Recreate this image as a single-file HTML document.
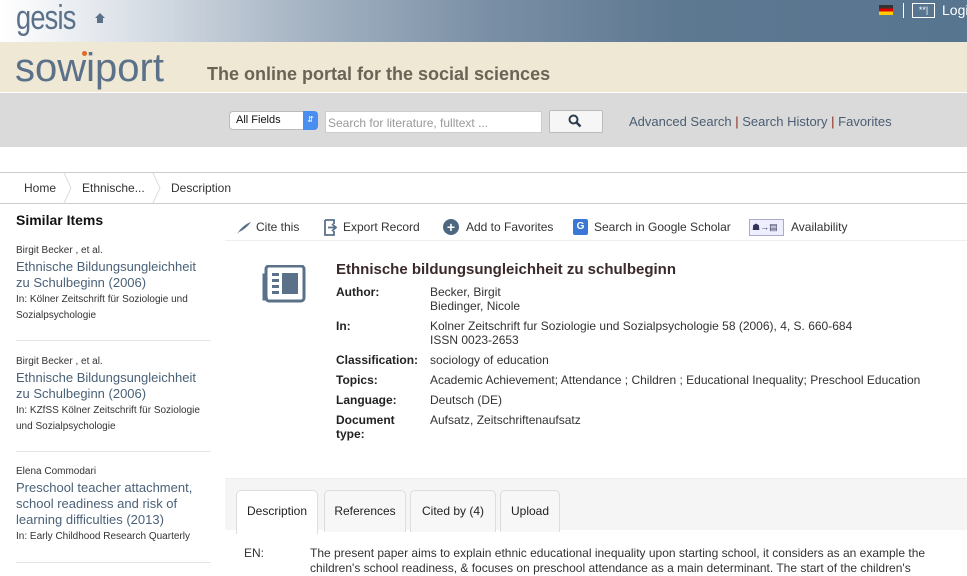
<!DOCTYPE html>
<html><head><meta charset="utf-8"><style>
*{margin:0;padding:0;box-sizing:border-box}
body{width:967px;height:576px;overflow:hidden;font-family:"Liberation Sans",Arial,sans-serif;background:#fff;color:#333;position:relative}
.a{position:absolute;white-space:nowrap}
#top{position:absolute;left:0;top:0;width:967px;height:42px;background:linear-gradient(90deg,#fff 0%,#dfe4ea 12%,#a9b7c6 30%,#7b90a6 50%,#5d7891 70%,#587590 100%)}
#beige{position:absolute;left:0;top:42px;width:967px;height:50px;background:#eee8d5}
#grey{position:absolute;left:0;top:93px;width:967px;height:54px;background:#dadada}
.lnk{color:#4a5d73}
.sep{color:#8a2a1a}
.sim{font-size:11px;color:#333}
.simt{font-size:13px;color:#4a6178;line-height:16px}
.lab{font-size:12px;font-weight:bold;color:#222}
.val{font-size:12px;color:#333}
.tab{position:absolute;top:490px;height:42px;border:1px solid #ddd;border-bottom:none;border-radius:5px 5px 0 0;background:#f7f7f7;font-size:12px;color:#222;text-align:center;padding-top:13px}
</style></head><body>
<div id="top"></div>
<div class="a" style="left:16px;top:-1px;font-size:34px;color:#5a7189;letter-spacing:-1px;transform:scaleX(.8);transform-origin:left">gesis</div>
<svg class="a" style="left:94px;top:12px" width="12" height="12"><path d="M6 1L1 6h2v5h6V6h2z" fill="#5a7189"/></svg>
<div class="a" style="left:879px;top:5px;width:14px;height:10px;background:linear-gradient(#333 33%,#d00 33% 66%,#fc0 66%)"></div>
<div class="a" style="left:903px;top:3px;width:1px;height:15px;background:#fff"></div>
<div class="a" style="left:912px;top:3px;width:23px;height:15px;border:1px solid #fff;color:#fff;font-size:9px;line-height:13px;text-align:center">**|</div>
<div class="a" style="left:942px;top:2px;font-size:14px;color:#fff">Login</div>
<div id="beige"></div>
<div class="a" style="left:15px;top:46px;font-size:40px;color:#5a7189;transform:scaleX(1.0);transform-origin:left;line-height:44px">sowiport</div>
<div class="a" style="left:82px;top:51px;width:5px;height:5px;border-radius:50%;background:#e06a2a"></div>
<div class="a" style="left:207px;top:64px;font-size:18px;font-weight:bold;color:#6b6356">The online portal for the social sciences</div>
<div class="a" style="left:0;top:92px;width:967px;height:1px;background:#fff"></div>
<div id="grey"></div>
<div class="a" style="left:229px;top:111px;width:89px;height:19px;background:#fff;border:1px solid #bbb;border-radius:4px;font-size:11px;padding:2px 0 0 6px;color:#111">All Fields</div>
<div class="a" style="left:303px;top:111px;width:15px;height:19px;background:#4a8ef0;border-radius:0 4px 4px 0;color:#fff;font-size:8px;text-align:center;line-height:18px">&#8693;</div>
<div class="a" style="left:325px;top:111px;width:217px;height:22px;background:#fff;border:1px solid #ccc;font-size:12px;color:#999;padding:4px 0 0 2px">Search for literature, fulltext ...</div>
<div class="a" style="left:549px;top:110px;width:54px;height:23px;background:#f6f6f6;border:1px solid #bbb;border-radius:2px"></div>
<svg class="a" style="left:568px;top:114px" width="14" height="14"><circle cx="5.5" cy="5.5" r="4" fill="none" stroke="#2d3d4d" stroke-width="2"/><line x1="8.5" y1="8.5" x2="12.5" y2="12.5" stroke="#2d3d4d" stroke-width="2.5"/></svg>
<div class="a" style="left:629px;top:114px;font-size:13px"><span class="lnk">Advanced Search</span> <span class="sep">|</span> <span class="lnk">Search History</span> <span class="sep">|</span> <span class="lnk">Favorites</span></div>
<div class="a" style="left:0;top:172px;width:967px;height:32px;border-top:1px solid #ccc;border-bottom:1px solid #ccc"></div>
<div class="a" style="left:24px;top:181px;font-size:12px;color:#333">Home</div>
<svg class="a" style="left:63px;top:173px" width="10" height="31"><polyline points="1,0 8,15 1,30" fill="none" stroke="#ddd"/></svg>
<div class="a" style="left:82px;top:181px;font-size:12px;color:#333">Ethnische...</div>
<svg class="a" style="left:152px;top:173px" width="10" height="31"><polyline points="1,0 8,15 1,30" fill="none" stroke="#ddd"/></svg>
<div class="a" style="left:171px;top:181px;font-size:12px;color:#333">Description</div>

<div class="a" style="left:16px;top:212px;font-size:14px;font-weight:bold;color:#111">Similar Items</div>
<div class="a sim" style="left:16px;top:245px;font-size:10px">Birgit Becker , et al.</div>
<div class="a simt" style="left:16px;top:259px">Ethnische Bildungsungleichheit<br>zu Schulbeginn (2006)</div>
<div class="a sim" style="left:16px;top:292px;font-size:10px;line-height:16px">In: Kölner Zeitschrift für Soziologie und<br>Sozialpsychologie</div>
<div class="a" style="left:16px;top:340px;width:195px;height:1px;background:#e4e4e4"></div>
<div class="a sim" style="left:16px;top:356px;font-size:10px">Birgit Becker , et al.</div>
<div class="a simt" style="left:16px;top:370px">Ethnische Bildungsungleichheit<br>zu Schulbeginn (2006)</div>
<div class="a sim" style="left:16px;top:403px;font-size:10px;line-height:16px">In: KZfSS Kölner Zeitschrift für Soziologie<br>und Sozialpsychologie</div>
<div class="a" style="left:16px;top:451px;width:195px;height:1px;background:#e4e4e4"></div>
<div class="a sim" style="left:16px;top:466px;font-size:10px">Elena Commodari</div>
<div class="a simt" style="left:16px;top:480px">Preschool teacher attachment,<br>school readiness and risk of<br>learning difficulties (2013)</div>
<div class="a sim" style="left:16px;top:531px;font-size:10px">In: Early Childhood Research Quarterly</div>
<div class="a" style="left:16px;top:562px;width:195px;height:1px;background:#e4e4e4"></div>

<svg class="a" style="left:236px;top:221px" width="16" height="14"><path d="M1 13C4 8 9 3 15 1 12 5 8 9 3 11z" fill="#5a7189"/></svg>
<div class="a" style="left:256px;top:220px;font-size:12px;color:#333">Cite this</div>
<svg class="a" style="left:322px;top:219px" width="16" height="17"><path d="M3 1h9v4M3 1v15h9v-4" fill="none" stroke="#5a7189" stroke-width="1.8"/><path d="M6 8.5h7M10 5l4 3.5-4 3.5" fill="none" stroke="#5a7189" stroke-width="1.8"/></svg>
<div class="a" style="left:343px;top:220px;font-size:12px;color:#333">Export Record</div>
<div class="a" style="left:443px;top:219px;width:16px;height:16px;border-radius:50%;background:#4e6780;color:#fff;font-size:14px;font-weight:bold;text-align:center;line-height:16px">+</div>
<div class="a" style="left:466px;top:220px;font-size:12px;color:#333">Add to Favorites</div>
<div class="a" style="left:573px;top:219px;width:15px;height:16px;background:#3b78d6;border-radius:2px;color:#fff;font-size:10px;text-align:center;line-height:16px;font-weight:bold">G</div>
<div class="a" style="left:594px;top:220px;font-size:12px;color:#333">Search in Google Scholar</div>
<div class="a" style="left:749px;top:219px;width:35px;height:17px;border:1px solid #aac;background:#eef;font-size:9px;color:#335;padding-left:2px;line-height:15px">&#9751;→&#9636;</div>
<div class="a" style="left:791px;top:220px;font-size:12px;color:#333">Availability</div>
<div class="a" style="left:225px;top:240px;width:742px;height:1px;background:#eee"></div>

<svg class="a" style="left:262px;top:265px" width="44" height="38"><rect x="4" y="1" width="38" height="35" rx="3" fill="none" stroke="#5a7189" stroke-width="3"/><path d="M4 10H2v24h4" fill="none" stroke="#5a7189" stroke-width="3"/><rect x="10" y="8" width="7" height="3" fill="#5a7189"/><rect x="10" y="14" width="7" height="3" fill="#5a7189"/><rect x="10" y="20" width="7" height="3" fill="#5a7189"/><rect x="10" y="26" width="7" height="3" fill="#5a7189"/><rect x="20" y="8" width="16" height="21" fill="#5a7189"/></svg>
<div class="a" style="left:336px;top:261px;font-size:15px;font-weight:bold;color:#3a2a2a">Ethnische bildungsungleichheit zu schulbeginn</div>
<div class="a lab" style="left:336px;top:285px">Author:</div>
<div class="a val" style="left:430px;top:285px;line-height:14px">Becker, Birgit<br>Biedinger, Nicole</div>
<div class="a lab" style="left:336px;top:319px">In:</div>
<div class="a val" style="left:430px;top:319px;line-height:14px">Kolner Zeitschrift fur Soziologie und Sozialpsychologie 58 (2006), 4, S. 660-684<br>ISSN 0023-2653</div>
<div class="a lab" style="left:336px;top:353px">Classification:</div>
<div class="a val" style="left:430px;top:353px">sociology of education</div>
<div class="a lab" style="left:336px;top:373px">Topics:</div>
<div class="a val" style="left:430px;top:373px">Academic Achievement; Attendance ; Children ; Educational Inequality; Preschool Education</div>
<div class="a lab" style="left:336px;top:393px">Language:</div>
<div class="a val" style="left:430px;top:393px">Deutsch (DE)</div>
<div class="a lab" style="left:336px;top:413px;line-height:14px">Document<br>type:</div>
<div class="a val" style="left:430px;top:413px">Aufsatz, Zeitschriftenaufsatz</div>

<div class="a" style="left:225px;top:478px;width:742px;height:52px;background:#f5f5f5;border-top:1px solid #eee"></div>
<div class="tab" style="left:236px;width:82px;background:#fff;height:44px">Description</div>
<div class="tab" style="left:324px;width:82px">References</div>
<div class="tab" style="left:410px;width:86px">Cited by (4)</div>
<div class="tab" style="left:500px;width:60px">Upload</div>
<div class="a val" style="left:244px;top:546px">EN:</div>
<div class="a val" style="left:310px;top:546px;line-height:15px">The present paper aims to explain ethnic educational inequality upon starting school, it considers as an example the<br>children's school readiness, &amp; focuses on preschool attendance as a main determinant. The start of the children's</div>
</body></html>
